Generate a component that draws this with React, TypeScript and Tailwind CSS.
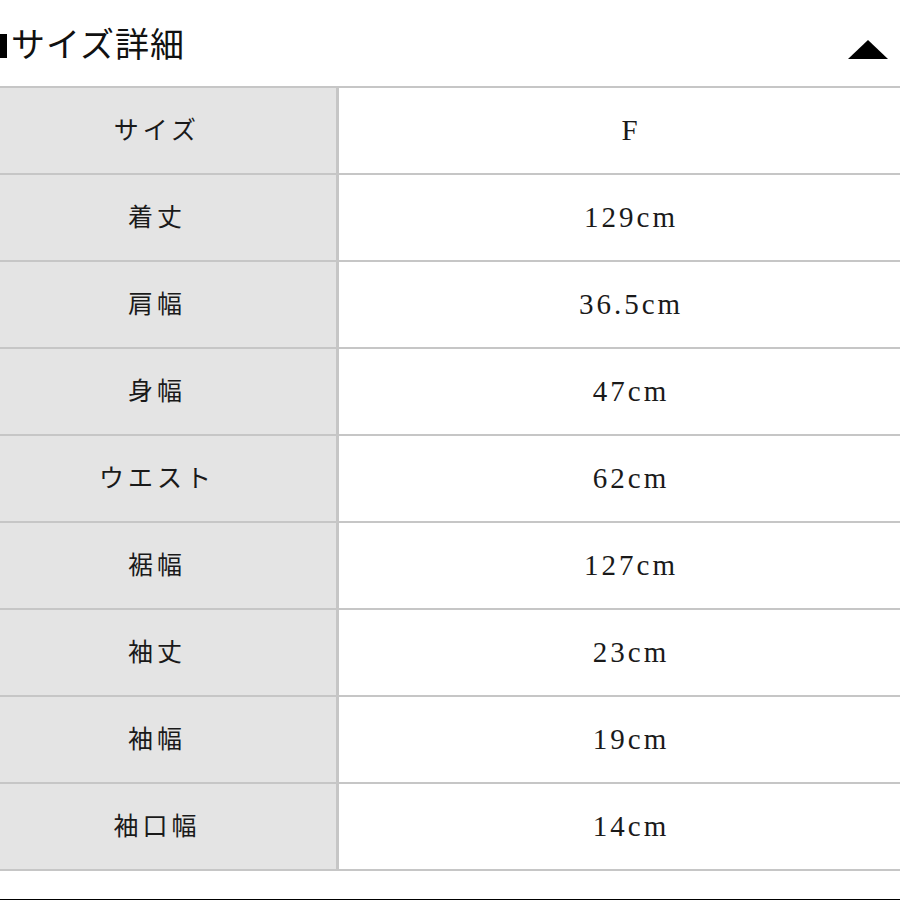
import React from "react";

type Row = {
  label: string;
  value: string;
};

const rows: Row[] = [
  { label: "サイズ", value: "F" },
  { label: "着丈", value: "129cm" },
  { label: "肩幅", value: "36.5cm" },
  { label: "身幅", value: "47cm" },
  { label: "ウエスト", value: "62cm" },
  { label: "裾幅", value: "127cm" },
  { label: "袖丈", value: "23cm" },
  { label: "袖幅", value: "19cm" },
  { label: "袖口幅", value: "14cm" },
];

const jpFont = {
  fontFamily: '"Liberation Serif", "Noto Sans CJK JP", serif',
};

const App: React.FC = () => {
  const header = () => {
    return (
      <div className="flex h-[86px] items-center justify-between pt-[6px]">
        <div className="flex items-center">
          <span className="block h-[24px] w-[7px] bg-black" />
          <span className="ml-[4px] text-[34px] leading-none tracking-[1px] text-[#111]">サイズ詳細</span>
        </div>
        <svg width="40" height="19" viewBox="0 0 40 19" className="mr-[12px] mt-[6px]">
          <polygon points="20,0 40,19 0,19" fill="#000" />
        </svg>
      </div>
    );
  };

  const tableRow = (row: Row) => {
    return (
      <div key={row.label} className="flex h-[87px] border-t-2 border-[#c6c6c6]">
        <div className="flex w-[336px] items-center justify-center bg-[#e4e4e4] pr-[26px]">
          <span className="pl-[4px] text-[25px] tracking-[4px] text-[#1a1a1a]">{row.label}</span>
        </div>
        <div className="w-[3px] bg-[#c6c6c6]" />
        <div className="flex flex-1 items-center justify-center bg-white pl-[20px]">
          <span className="pl-[3px] text-[29px] tracking-[3px] text-[#1a1a1a]">{row.value}</span>
        </div>
      </div>
    );
  };

  return (
    <div className="h-[900px] w-[900px] overflow-hidden bg-white" style={jpFont}>
      {header()}
      <div className="border-b-2 border-[#c6c6c6]">{rows.map(tableRow)}</div>
      <div className="mt-[28px] h-[2px] bg-black" />
    </div>
  );
};

export default App;
